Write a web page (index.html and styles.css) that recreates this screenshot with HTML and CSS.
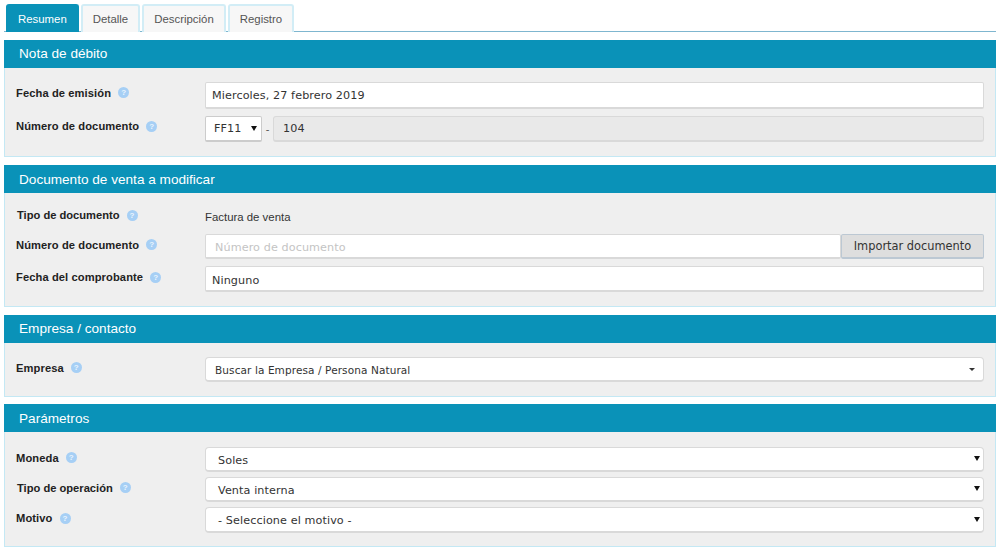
FILE: index.html
```html
<!DOCTYPE html>
<html lang="es">
<head>
<meta charset="utf-8">
<title>Nota de débito</title>
<link rel="stylesheet" href="styles.css">
</head>
<body>
<nav class="tabs">
  <a class="tab active">Resumen</a>
  <a class="tab">Detalle</a>
  <a class="tab">Descripción</a>
  <a class="tab">Registro</a>
</nav>

<section class="panel p1">
  <h2>Nota de débito</h2>
  <div class="body">
    <div class="row h27">
      <label>Fecha de emisión<i class="help">?</i></label>
      <input class="field" value="Miercoles, 27 febrero 2019">
    </div>
    <div class="row h26">
      <label>Número de documento<i class="help">?</i></label>
      <div class="group">
        <div class="mini-select">FF11<b class="arrow"></b></div>
        <span class="dash">-</span>
        <input class="field disabled" value="104" disabled>
      </div>
    </div>
  </div>
</section>

<section class="panel p2">
  <h2>Documento de venta a modificar</h2>
  <div class="body">
    <div class="row h21">
      <label class="nudge">Tipo de documento<i class="help">?</i></label>
      <span class="static">Factura de venta</span>
    </div>
    <div class="row h25">
      <label>Número de documento<i class="help">?</i></label>
      <div class="group nogap">
        <input class="field light low" placeholder="Número de documento">
        <button class="btn">Importar documento</button>
      </div>
    </div>
    <div class="row h26">
      <label>Fecha del comprobante<i class="help">?</i></label>
      <input class="field low" value="Ninguno">
    </div>
  </div>
</section>

<section class="panel p3">
  <h2>Empresa / contacto</h2>
  <div class="body">
    <div class="row h25">
      <label>Empresa<i class="help">?</i></label>
      <div class="select s2">Buscar la Empresa / Persona Natural<b class="arrow small"></b></div>
    </div>
  </div>
</section>

<section class="panel p4">
  <h2>Parámetros</h2>
  <div class="body">
    <div class="row h25">
      <label>Moneda<i class="help">?</i></label>
      <div class="select">Soles<b class="arrow"></b></div>
    </div>
    <div class="row h25">
      <label class="nudge">Tipo de operación<i class="help">?</i></label>
      <div class="select">Venta interna<b class="arrow"></b></div>
    </div>
    <div class="row h26">
      <label>Motivo<i class="help">?</i></label>
      <div class="select">- Seleccione el motivo -<b class="arrow"></b></div>
    </div>
  </div>
</section>
</body>
</html>
```
FILE: styles.css
```css
* { box-sizing: border-box; }
html, body { margin: 0; background: #fff; }
body {
  padding: 4px 4px 0;
  font-family: "Liberation Sans", Arial, sans-serif;
  color: #222;
  overflow: hidden;
}
.tabs {
  display: flex;
  gap: 2px;
  height: 28px;
  padding-left: 2px;
  border-bottom: 1px solid #7fb6cf;
}
.tab {
  display: flex;
  align-items: center;
  padding: 0 10px;
  height: 28px;
  font-size: 11.4px;
  color: #555;
  background: #f7f7f7;
  border: 2px solid #d2edf6;
  border-bottom: 0;
  border-radius: 3px 3px 0 0;
}
.tab.active {
  color: #fff;
  background: #0a92b8;
  border-color: #0a92b8;
}
.panel {
  background: #efefef;
  border: 1px solid #c4e8f4;
  border-top: 0;
}
.p1 { margin-top: 8px; height: 117px; }
.p2 { margin-top: 8px; height: 142px; }
.p3 { margin-top: 8px; height: 82px; }
.p4 { margin-top: 7px; height: 143px; }
.panel h2 {
  margin: 0 -1px;
  height: 28px;
  padding: 0 15px;
  background: #0a92b8;
  color: #fff;
  font-size: 13.6px;
  font-weight: 400;
  line-height: 27px;
}
.p2 h2, .p4 h2 { line-height: 29px; }
.body {
  display: flex;
  flex-direction: column;
  padding: 14px 11px 0;
}
.p1 .body { gap: 7px; }
.p2 .body { gap: 7px; }
.p4 .body { padding-top: 15px; gap: 5px; }
.row {
  display: grid;
  grid-template-columns: 189px 1fr;
  align-items: center;
}
.h21 { height: 20px; }
.h25 { height: 25px; }
.h26 { height: 26px; }
.h27 { height: 27px; }
label {
  display: flex;
  align-items: center;
  font-size: 11.15px;
  font-weight: 700;
  letter-spacing: 0.1px;
  color: #222;
  position: relative;
  top: -2px;
}
.p1 label { top: -3px; }
label.nudge { padding-left: 1px; letter-spacing: 0; }
.help {
  display: inline-block;
  width: 11px;
  height: 11px;
  margin-left: 7px;
  border-radius: 50%;
  background: #a6cff5;
  color: #eaf4fd;
  font-size: 8px;
  font-weight: 700;
  font-style: normal;
  line-height: 11px;
  text-align: center;
  letter-spacing: 0;
}
.field, .select, .mini-select {
  height: 100%;
  border: 1px solid #d9d9d9;
  border-bottom-width: 2px;
  border-radius: 2px;
  background: #fff;
  font-family: "DejaVu Sans", Verdana, sans-serif;
  font-size: 11.2px;
  letter-spacing: 0.1px;
  color: #333;
}
.field {
  width: 100%;
  min-width: 0;
  padding: 0 6px;
  outline: 0;
}
.field.low { padding-top: 3px; }
.field.light::placeholder { color: #c4c4c4; opacity: 1; }
.field.light { padding-left: 9px; padding-top: 2px; }
.field.disabled {
  background: #e9e9e9;
  padding-left: 9px;
  border-radius: 3px;
}
.group {
  display: flex;
  align-items: center;
  height: 100%;
}
.mini-select {
  flex: 0 0 57px;
  display: flex;
  align-items: center;
  padding-left: 8px;
  position: relative;
  border-color: #ccc;
}
.dash {
  flex: 0 0 11px;
  text-align: center;
  font-size: 11px;
  color: #555;
}
.static {
  font-size: 11.4px;
  color: #333;
  position: relative;
  top: 0;
}
.btn {
  flex: 0 0 143px;
  height: 100%;
  background: #dedede;
  border: 1px solid #bcc8d3;
  border-bottom-width: 2px;
  border-radius: 2px;
  font-family: "DejaVu Sans", Verdana, sans-serif;
  font-size: 11.4px;
  color: #333;
  padding: 0;
}
.select {
  display: flex;
  align-items: center;
  position: relative;
  padding-left: 12px;
  padding-top: 2px;
  border-radius: 4px;
}
.select.s2 { padding-left: 9px; padding-top: 1px; font-size: 10.5px; }
.arrow {
  position: absolute;
  right: 3px;
  top: 50%;
  margin-top: -3px;
  width: 0;
  height: 0;
  border-left: 3px solid transparent;
  border-right: 3px solid transparent;
  border-top: 5px solid #111;
}
.mini-select .arrow { right: 4px; margin-top: -3px; }
.arrow.small {
  right: 8px;
  margin-top: -1px;
  border-top-width: 3px;
  border-top-color: #333;
}
```
